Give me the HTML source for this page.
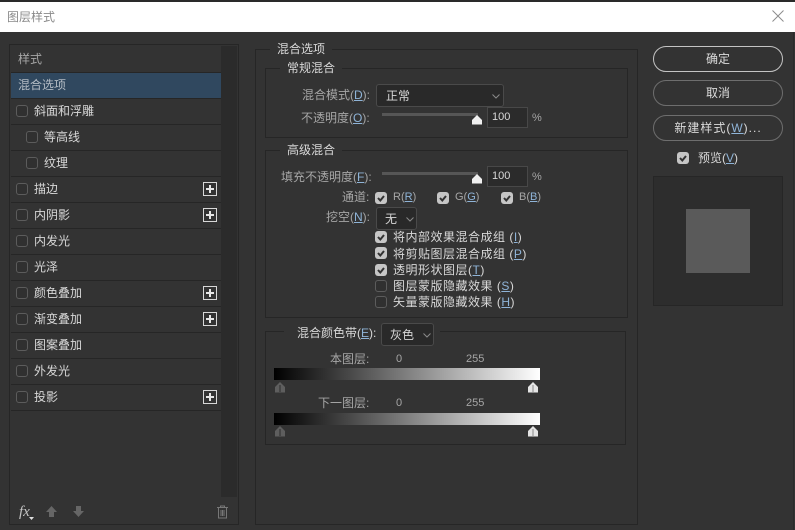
<!DOCTYPE html>
<html lang="zh"><head><meta charset="utf-8"><title>图层样式</title>
<style>
html,body{margin:0;padding:0;background:#333;}
body{width:795px;height:530px;position:relative;overflow:hidden;font:12px/16px "Liberation Sans","WenQuanYi Zen Hei","Noto Sans CJK SC",sans-serif;color:#d8d8d8;}
div,span.a{position:absolute;box-sizing:border-box;}
.t{white-space:nowrap;height:16px;}
.dim{color:#a6a6a6;}
.u{text-decoration:underline;color:#8fb4d8;}
.sep{left:11px;width:210px;height:1px;background:#262626;}
.cb{width:12px;height:12px;border:1px solid #5c5c5c;border-radius:3px;background:#303030;}
.ck{width:12px;height:12px;border-radius:3px;background:#c6c6c6;}
.ck svg{position:absolute;left:0;top:0;}
.plus{left:203px;width:14px;height:14px;border:1px solid #d8d8d8;}
.plus:before{content:"";position:absolute;left:2px;top:5px;width:8px;height:2px;background:#e6e6e6;}
.plus:after{content:"";position:absolute;left:5px;top:2px;width:2px;height:8px;background:#e6e6e6;}
.box{border:1px solid #262626;}
.leg{background:#333;padding:0 7px;white-space:nowrap;height:16px;}
.sel{background:#292929;border:1px solid #4a4a4a;border-radius:3px;height:23px;}
.sel svg{position:absolute;}
.inp{background:#2b2b2b;border:1px solid #484848;width:41px;height:21px;font-size:11px;line-height:19px;padding-left:4px;color:#d8d8d8;}
.bar{height:3px;background:#565656;width:96px;left:382px;}
.btn{left:653px;width:130px;height:26px;border:1px solid #6e6e6e;border-radius:13px;text-align:center;line-height:24px;color:#dcdcdc;}
.grad{left:274px;width:266px;height:12px;background:linear-gradient(90deg,#000,#fff);}
svg{display:block;}
</style></head><body>

<!-- title bar -->
<div style="left:0;top:0;width:795px;height:2px;background:#2a2a2a"></div>
<div style="left:0;top:2px;width:795px;height:30px;background:#fff"></div>
<div class="t" style="left:7px;top:9px;font-size:12px;color:#8a8a8a">图层样式</div>
<svg class="a" style="position:absolute;left:772px;top:10px" width="12" height="12" viewBox="0 0 12 12"><path d="M.5.5l11 11M11.5.5l-11 11" stroke="#8c8c8c" fill="none"/></svg>
<div style="left:793px;top:32px;width:1px;height:498px;background:#2b2b2b"></div>

<!-- left panel -->
<div class="box" style="left:9px;top:44px;width:230px;height:481px;"></div>
<div style="left:221px;top:46px;width:16px;height:451px;background:#2b2b2b"></div>
<div style="left:11px;top:73px;width:210px;height:25px;background:#30485f"></div>
<div class="t dim" style="left:18px;top:51px">样式</div>
<div class="t" style="left:18px;top:77px;color:#b4bcc4">混合选项</div>
<div class="sep" style="top:72px"></div>
<div class="sep" style="top:98px"></div>
<div class="sep" style="top:124px"></div>
<div class="sep" style="top:150px"></div>
<div class="sep" style="top:176px"></div>
<div class="sep" style="top:202px"></div>
<div class="sep" style="top:228px"></div>
<div class="sep" style="top:254px"></div>
<div class="sep" style="top:280px"></div>
<div class="sep" style="top:306px"></div>
<div class="sep" style="top:332px"></div>
<div class="sep" style="top:358px"></div>
<div class="sep" style="top:384px"></div>
<div class="sep" style="top:410px"></div>

<div class="cb" style="left:16px;top:105px"></div><div class="t" style="left:34px;top:103px">斜面和浮雕</div>
<div class="cb" style="left:26px;top:131px"></div><div class="t" style="left:44px;top:129px">等高线</div>
<div class="cb" style="left:26px;top:157px"></div><div class="t" style="left:44px;top:155px">纹理</div>
<div class="cb" style="left:16px;top:183px"></div><div class="t" style="left:34px;top:181px">描边</div><div class="plus" style="top:182px"></div>
<div class="cb" style="left:16px;top:209px"></div><div class="t" style="left:34px;top:207px">内阴影</div><div class="plus" style="top:208px"></div>
<div class="cb" style="left:16px;top:235px"></div><div class="t" style="left:34px;top:233px">内发光</div>
<div class="cb" style="left:16px;top:261px"></div><div class="t" style="left:34px;top:259px">光泽</div>
<div class="cb" style="left:16px;top:287px"></div><div class="t" style="left:34px;top:285px">颜色叠加</div><div class="plus" style="top:286px"></div>
<div class="cb" style="left:16px;top:313px"></div><div class="t" style="left:34px;top:311px">渐变叠加</div><div class="plus" style="top:312px"></div>
<div class="cb" style="left:16px;top:339px"></div><div class="t" style="left:34px;top:337px">图案叠加</div>
<div class="cb" style="left:16px;top:365px"></div><div class="t" style="left:34px;top:363px">外发光</div>
<div class="cb" style="left:16px;top:391px"></div><div class="t" style="left:34px;top:389px">投影</div><div class="plus" style="top:390px"></div>

<!-- footer icons -->
<div class="t" style="left:19px;top:503px;font:italic 15px/18px 'Liberation Serif',serif;color:#c4c4c4;height:18px">fx</div>
<svg style="position:absolute;left:29px;top:517px" width="5" height="3"><path d="M0 0h5L2.500 3z" fill="#e0e0e0"/></svg>
<svg style="position:absolute;left:45px;top:505px" width="13" height="13" viewBox="0 0 13 13"><path d="M6.500 1L12 7H9v5H4V7H1z" fill="#666"/></svg>
<svg style="position:absolute;left:72px;top:505px" width="13" height="13" viewBox="0 0 13 13"><path d="M4 1h5v5h3l-5.500 6L1 6h3z" fill="#666"/></svg>
<svg style="position:absolute;left:216px;top:505px" width="13" height="14" viewBox="0 0 13 14"><path d="M1 2.500h11M4.500 2.500V1h4v1.500M2.500 2.500V13h8V2.500M5 5v6M6.500 5v6M8 5v6" stroke="#777" fill="none"/></svg>

<!-- main -->
<div class="box" style="left:255px;top:49px;width:383px;height:476px"></div>
<div class="leg t" style="left:270px;top:41px">混合选项</div>

<div class="box" style="left:265px;top:68px;width:363px;height:70px"></div>
<div class="leg t" style="left:280px;top:60px">常规混合</div>
<div class="t dim" style="left:302px;top:87px">混合模式(<span class="u">D</span>):</div>
<div class="sel" style="left:376px;top:84px;width:128px"><svg style="left:115px;top:9px" width="8" height="5"><path d="M.5.500L4 4 7.500.5" stroke="#8a8a8a" fill="none"/></svg></div>
<div class="t" style="left:386px;top:88px">正常</div>
<div class="t dim" style="left:301px;top:110px">不透明度(<span class="u">O</span>):</div>
<div class="bar" style="top:113px"></div>
<svg style="position:absolute;left:471px;top:115px" width="12" height="10" viewBox="0 0 12 10"><path d="M6 0L11 5V9.500H1V5z" fill="#f0f0f0"/></svg>
<div class="inp" style="left:487px;top:107px">100</div>
<div class="t dim" style="left:532px;top:110px;font-size:11px">%</div>

<div class="box" style="left:265px;top:150px;width:363px;height:168px"></div>
<div class="leg t" style="left:280px;top:142px">高级混合</div>
<div class="t dim" style="left:281px;top:169px">填充不透明度(<span class="u">F</span>):</div>
<div class="bar" style="top:172px"></div>
<svg style="position:absolute;left:471px;top:174px" width="12" height="10" viewBox="0 0 12 10"><path d="M6 0L11 5V9.500H1V5z" fill="#f0f0f0"/></svg>
<div class="inp" style="left:487px;top:166px">100</div>
<div class="t dim" style="left:532px;top:169px;font-size:11px">%</div>

<div class="t dim" style="left:342px;top:189px">通道:</div>
<div class="ck" style="left:375px;top:192px"><svg width="12" height="12"><path d="M3 6l2.300 2.500L9 4" stroke="#333" stroke-width="2" fill="none"/></svg></div>
<div class="t dim" style="left:393px;top:189px;font-size:11px">R(<span class="u">R</span>)</div>
<div class="ck" style="left:437px;top:192px"><svg width="12" height="12"><path d="M3 6l2.300 2.500L9 4" stroke="#333" stroke-width="2" fill="none"/></svg></div>
<div class="t dim" style="left:455px;top:189px;font-size:11px">G(<span class="u">G</span>)</div>
<div class="ck" style="left:501px;top:192px"><svg width="12" height="12"><path d="M3 6l2.300 2.500L9 4" stroke="#333" stroke-width="2" fill="none"/></svg></div>
<div class="t dim" style="left:519px;top:189px;font-size:11px">B(<span class="u">B</span>)</div>

<div class="t dim" style="left:326px;top:209px">挖空(<span class="u">N</span>):</div>
<div class="sel" style="left:376px;top:207px;width:41px"><svg style="left:29px;top:9px" width="8" height="5"><path d="M.5.500L4 4 7.500.5" stroke="#8a8a8a" fill="none"/></svg></div>
<div class="t" style="left:385px;top:211px">无</div>

<div class="ck" style="left:375px;top:231px"><svg width="12" height="12"><path d="M3 6l2.300 2.500L9 4" stroke="#333" stroke-width="2" fill="none"/></svg></div>
<div class="t" style="left:393px;top:229px;letter-spacing:.5px">将内部效果混合成组 (<span class="u">I</span>)</div>
<div class="ck" style="left:375px;top:247px"><svg width="12" height="12"><path d="M3 6l2.300 2.500L9 4" stroke="#333" stroke-width="2" fill="none"/></svg></div>
<div class="t" style="left:393px;top:246px;letter-spacing:.5px">将剪贴图层混合成组 (<span class="u">P</span>)</div>
<div class="ck" style="left:375px;top:264px"><svg width="12" height="12"><path d="M3 6l2.300 2.500L9 4" stroke="#333" stroke-width="2" fill="none"/></svg></div>
<div class="t" style="left:393px;top:262px;letter-spacing:.5px">透明形状图层(<span class="u">T</span>)</div>
<div class="cb" style="left:375px;top:280px"></div>
<div class="t" style="left:393px;top:278px;letter-spacing:.5px">图层蒙版隐藏效果 (<span class="u">S</span>)</div>
<div class="cb" style="left:375px;top:296px"></div>
<div class="t" style="left:393px;top:294px;letter-spacing:.5px">矢量蒙版隐藏效果 (<span class="u">H</span>)</div>

<div class="box" style="left:265px;top:331px;width:361px;height:114px"></div>
<div class="leg" style="left:284px;top:325px;width:156px;height:14px;padding:0"></div>
<div class="t" style="left:297px;top:325px">混合颜色带(<span class="u">E</span>):</div>
<div class="sel" style="left:381px;top:323px;width:53px"><svg style="left:41px;top:9px" width="8" height="5"><path d="M.5.500L4 4 7.500.5" stroke="#8a8a8a" fill="none"/></svg></div>
<div class="t" style="left:390px;top:327px">灰色</div>

<div class="t dim" style="left:330px;top:351px">本图层:</div>
<div class="t dim" style="left:396px;top:351px;font-size:11px">0</div>
<div class="t dim" style="left:466px;top:351px;font-size:11px">255</div>
<div class="grad" style="top:368px"></div>
<svg style="position:absolute;left:274px;top:382px" width="12" height="11" viewBox="0 0 12 11"><path d="M6 0L11 5V10.500H1V5z" fill="#5e5e5e"/><path d="M6 3v7" stroke="#2c2c2c"/></svg>
<svg style="position:absolute;left:527px;top:382px" width="12" height="11" viewBox="0 0 12 11"><path d="M6 0L11 5V10.500H1V5z" fill="#e4e4e4"/><path d="M6 3v7" stroke="#888"/></svg>

<div class="t dim" style="left:318px;top:395px">下一图层:</div>
<div class="t dim" style="left:396px;top:395px;font-size:11px">0</div>
<div class="t dim" style="left:466px;top:395px;font-size:11px">255</div>
<div class="grad" style="top:413px"></div>
<svg style="position:absolute;left:274px;top:426px" width="12" height="11" viewBox="0 0 12 11"><path d="M6 0L11 5V10.500H1V5z" fill="#5e5e5e"/><path d="M6 3v7" stroke="#2c2c2c"/></svg>
<svg style="position:absolute;left:527px;top:426px" width="12" height="11" viewBox="0 0 12 11"><path d="M6 0L11 5V10.500H1V5z" fill="#e4e4e4"/><path d="M6 3v7" stroke="#888"/></svg>

<!-- right column -->
<div class="btn" style="top:46px;border-color:#c4c4c4">确定</div>
<div class="btn" style="top:80px">取消</div>
<div class="btn" style="top:115px;letter-spacing:1px">新建样式(<span class="u">W</span>)...</div>
<div class="ck" style="left:677px;top:152px"><svg width="12" height="12"><path d="M3 6l2.300 2.500L9 4" stroke="#333" stroke-width="2" fill="none"/></svg></div>
<div class="t" style="left:698px;top:150px">预览(<span class="u">V</span>)</div>
<div class="box" style="left:653px;top:176px;width:130px;height:130px;background:#2d2d2d"></div>
<div style="left:686px;top:209px;width:64px;height:64px;background:#5a5a5a"></div>
</body></html>
